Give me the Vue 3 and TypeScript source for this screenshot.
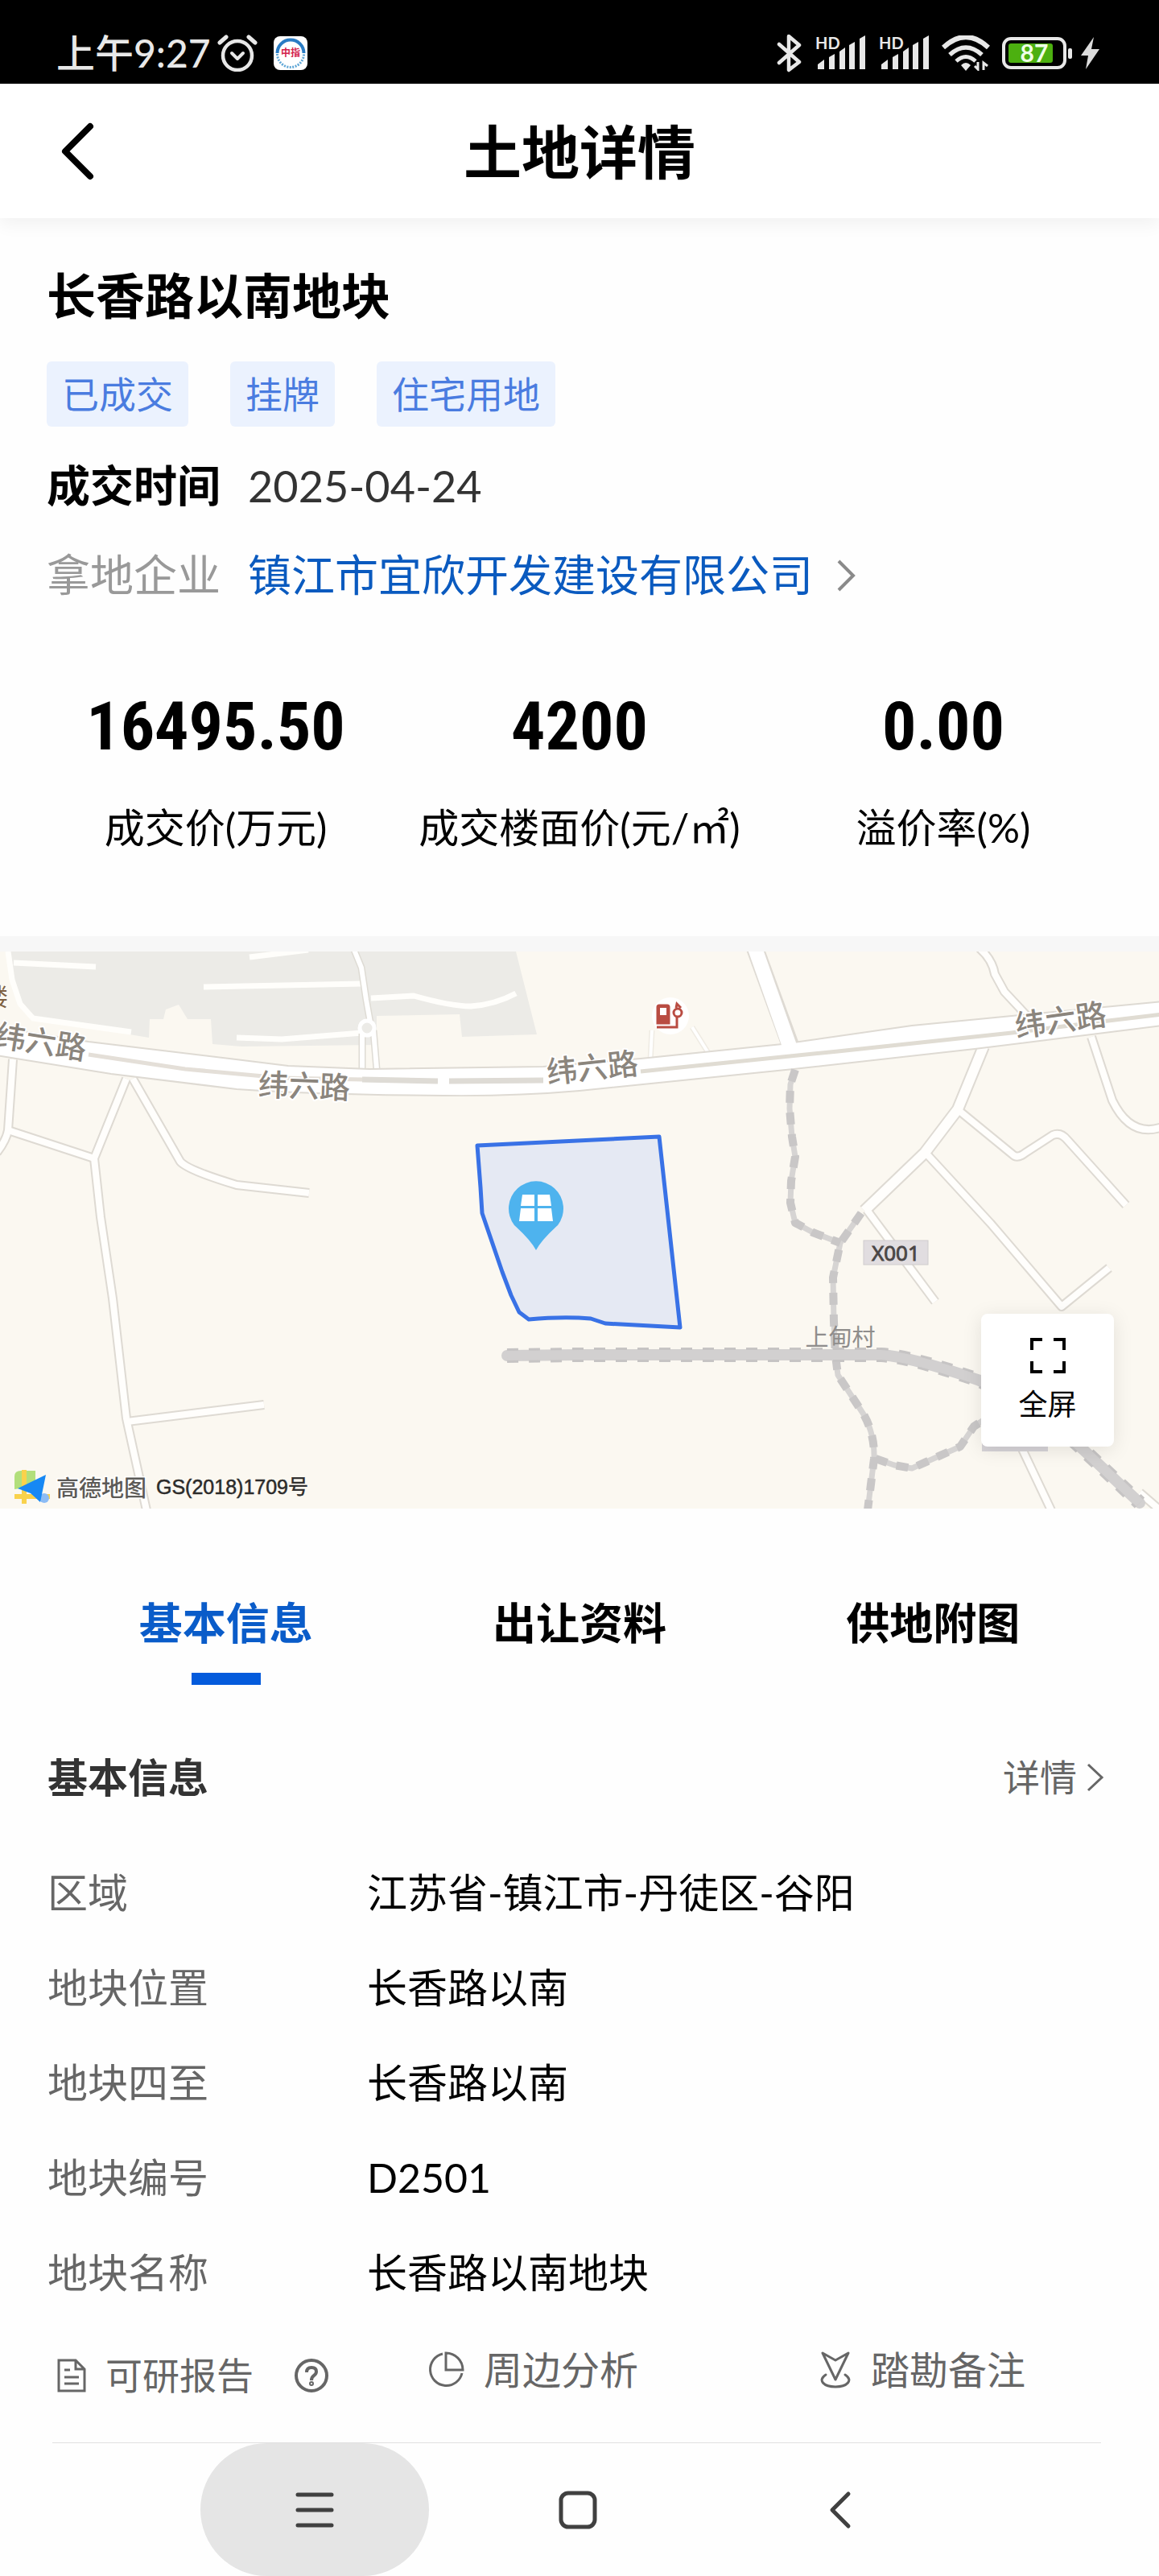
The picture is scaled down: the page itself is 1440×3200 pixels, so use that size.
<script setup lang="ts">
import { ref } from 'vue'

interface Stat { value: string; label: string }
interface Field { label: string; value: string }

const tags: string[] = ['已成交', '挂牌', '住宅用地']

const stats: Stat[] = [
  { value: '16495.50', label: '成交价(万元)' },
  { value: '4200', label: '成交楼面价(元/㎡)' },
  { value: '0.00', label: '溢价率(%)' },
]

const tabs: string[] = ['基本信息', '出让资料', '供地附图']
const activeTab = ref(0)

const fields: Field[] = [
  { label: '区域', value: '江苏省-镇江市-丹徒区-谷阳' },
  { label: '地块位置', value: '长香路以南' },
  { label: '地块四至', value: '长香路以南' },
  { label: '地块编号', value: 'D2501' },
  { label: '地块名称', value: '长香路以南地块' },
]

// Village lanes, drawn as a grey casing with a white core
const lanes: string[] = [
  'M16 134 L10 222 Q8 234 -4 250',
  'M10 222 L117 257',
  'M157 158 L117 257 L125 330 L140 431 L157 580 L182 694',
  'M165 158 L224 261 Q234 272 294 290 L384 300',
  'M158 584 L328 563',
  'M1217 -4 Q1233 10 1236 28 L1248 50 L1276 80',
  'M1192 198 L1258 252 Q1264 258 1274 250 L1308 228 Q1318 224 1326 234 L1399 315',
  'M1150 250 L1231 338 L1319 441 L1378 393',
  'M1077 321 L1162 435',
  'M1356 106 L1382 185 Q1405 232 1444 218',
  'M1270 618 L1306 694',
  'M1416 672 L1446 698',
]

const trails: string[] = [
  'M988 147 L982 165 L981 195 L984 230 L988 255 L983 285 L982 312 L988 337 L1010 349 L1044 362',
  'M1070 325 L1044 362 L1035 405 L1036 460 L1038 502 L1041 526 L1073 575 Q1087 600 1086 630 L1078 694',
  'M1088 630 L1111 638 L1133 642 L1193 615 L1210 590 L1225 580',
]

const highway = 'M630 502 L720 501 L1095 501 Q1130 503 1215 532 Q1290 565 1345 618 L1416 685'
</script>

<template>
  <div class="page">
    <div class="status">
      <div class="status-side">
        <span class="clock">上午9:27</span>
        <svg class="alarm" width="50" height="46" viewBox="0 0 50 46" fill="none" stroke="#e8e8e8" stroke-linecap="round">
          <circle cx="25" cy="26" r="18" stroke-width="4.5" />
          <path d="M3 10 L11 3 M47 10 L39 3" stroke-width="5" />
          <path d="M18 23 L25 30 L32 23" stroke-width="4" stroke-linejoin="round" />
        </svg>
        <svg width="42" height="42" viewBox="0 0 42 42">
          <rect width="42" height="42" rx="8" fill="#fff" />
          <path d="M4.500 21 A16.500 16.500 0 0 1 37.500 21" fill="none" stroke="#2a7cc4" stroke-width="4" />
          <path d="M4.500 22 A16.500 16.500 0 0 0 37.500 22" fill="none" stroke="#5fa6d6" stroke-width="3" stroke-dasharray="2 1.500" />
          <text x="21" y="25" font-size="12" font-weight="700" fill="#d3224a" text-anchor="middle">中指</text>
        </svg>
      </div>
      <div class="status-side right">
        <svg width="32" height="48" viewBox="0 0 32 48" fill="none" stroke="#e8e8e8" stroke-width="4.500" stroke-linecap="round" stroke-linejoin="round">
          <path d="M3 13 L28 35 L15 45 V3 L28 14 L3 36" />
        </svg>
        <svg v-for="n in 2" :key="n" class="signal" width="64" height="52" viewBox="0 -4 64 52" fill="#e8e8e8">
          <text x="1" y="17" font-size="20" font-weight="700">HD</text>
          <path d="M4 42 V36 L12 30 V42 Z M18 42 V27 L25 23 V42 Z M31 42 V20 L38 15 V42 Z M43 42 V12 L50 8 V42 Z M56 42 V4 L63 0 V42 Z" />
        </svg>
        <svg width="60" height="44" viewBox="0 0 60 44" fill="none" stroke="#e8e8e8">
          <path d="M2 15 Q30 -11 58 15" stroke-width="6" />
          <path d="M10 24 Q30 6 50 24" stroke-width="5.500" />
          <path d="M18 32 Q30 21 42 32" stroke-width="5" />
          <path d="M24 37 Q30 31 36 37 L30 44 Z" fill="#e8e8e8" stroke="none" />
          <path d="M45 33 V42 L41 38 M52 43 V34 L57 38" stroke-width="3" />
        </svg>
        <svg width="88" height="40" viewBox="0 0 88 40">
          <rect x="2" y="2" width="76" height="36" rx="9" fill="none" stroke="#e8e8e8" stroke-width="4" />
          <rect x="82" y="14" width="5" height="13" rx="2" fill="#e8e8e8" />
          <rect x="8" y="8" width="55" height="24" rx="3" fill="#4cb010" />
          <text x="40" y="31" font-size="30" font-weight="700" fill="#f0ffe8" text-anchor="middle">87</text>
        </svg>
        <svg class="bolt" width="24" height="40" viewBox="0 0 24 40"><path d="M17 0 L1 23 H10 L7 40 L24 15 H14 Z" fill="#dcdcdc" /></svg>
      </div>
    </div>

    <header class="header">
      <button class="back" type="button" aria-label="返回">
        <svg width="42" height="74" viewBox="0 0 42 74" fill="none" stroke="#000" stroke-width="8" stroke-linecap="round" stroke-linejoin="round">
          <path d="M37 6 L6 37 L37 68" />
        </svg>
      </button>
      <h1>土地详情</h1>
    </header>

    <section class="summary">
      <h2>长香路以南地块</h2>
      <div class="tags">
        <span v-for="tag in tags" :key="tag" class="tag">{{ tag }}</span>
      </div>
      <p class="line deal"><strong>成交时间</strong><span>2025-04-24</span></p>
      <p class="line buyer">
        <span class="muted">拿地企业</span>
        <a href="#company">镇江市宜欣开发建设有限公司
          <svg width="24" height="40" viewBox="0 0 24 40" fill="none" stroke="#8a8a8a" stroke-width="4"><path d="M2 2 L20 20 L2 38" /></svg>
        </a>
      </p>
      <div class="stats">
        <div v-for="s in stats" :key="s.label" class="stat">
          <b>{{ s.value }}</b>
          <span>{{ s.label }}</span>
        </div>
      </div>
    </section>

    <div class="map">
      <svg class="map-canvas" viewBox="0 0 1440 692" preserveAspectRatio="xMidYMid slice">
        <rect width="1440" height="692" fill="#fbf8f1" />
        <path d="M11 0 H641 L667 103 L574 106 L571 78 L468 80 V116 L300 118 L264 115 L262 84 H233 L222 66 L206 72 L203 84 H186 L185 107 L41 83 L22 60 Z" fill="#ecebe7" />
        <g fill="none" stroke="#fffefb" stroke-width="7">
          <path d="M10 0 L15 35 L25 65 L41 83 L163 100" />
          <path d="M17 14 L119 19 M310 7 L383 -2 M253 44 L450 40 M461 58 L514 55 Q560 68 585 68 Q615 66 641 52 M294 107 L350 109 L450 101" />
        </g>
        <path d="M440 -2 L449 20 L455 60 L460 88 M450 102 V146 M464 98 L468 146" fill="none" stroke="#dedbd4" stroke-width="9" />
        <path d="M440 -2 L449 20 L455 60 L460 88 M450 102 V146 M464 98 L468 146" fill="none" stroke="#fff" stroke-width="6" />
        <circle cx="456" cy="95" r="9" fill="#ecebe7" stroke="#fff" stroke-width="5" />
        <path d="M810 98 L808 136 M860 94 L880 126" stroke="#efebe3" stroke-width="7" />
        <path d="M810 98 L808 136 M860 94 L880 126" stroke="#fff" stroke-width="4" />

        <g fill="none" stroke-linejoin="round">
          <path v-for="d in lanes" :key="'c' + d" :d="d" stroke="#dedad3" stroke-width="12" />
          <path d="M938 -4 L984 122" stroke="#dedad3" stroke-width="22" />
          <path d="M1222 118 L1190 196 L1149 250 L1074 322" stroke="#dedad3" stroke-width="16" />
          <path v-for="d in lanes" :key="'f' + d" :d="d" stroke="#fffefc" stroke-width="8" />
          <path d="M1222 118 L1190 196 L1149 250 L1074 322" stroke="#fffefc" stroke-width="12" />
        </g>

        <path d="M-4 94 L110 112 L285 133 L358 142 L459 146 L675 143 L796 133 L972 115 L1133 92 L1257 80 L1444 62 V92 L1211 121 L986 146 L720 173 Q640 180 551 179 Q400 178 294 171 L138 152 L-4 129 Z" fill="#fff" stroke="#dedad3" stroke-width="2" />
        <path d="M938 -4 L984 126" fill="none" stroke="#fff" stroke-width="18" />
        <path d="M110 128 L230 146 L350 157 L450 159" fill="none" stroke="#e4dfd8" stroke-width="5" />
        <path d="M450 159 L544 161 M558 161 L675 160" stroke="#dedbd5" stroke-width="7" />
        <path d="M796 149 L1041 124 L1257 101 L1377 86 L1444 78" fill="none" stroke="#e0dcd3" stroke-width="5" />

        <g fill="none" stroke-linejoin="round">
          <path v-for="d in trails" :key="'t' + d" :d="d" stroke="#d6d4d3" stroke-width="7" />
          <path v-for="d in trails" :key="'d' + d" :d="d" stroke="#c9c7c7" stroke-width="10" stroke-dasharray="15 12" />
          <path :d="highway" stroke="#d2d0d0" stroke-width="14" stroke-linecap="round" />
          <path :d="highway" stroke="#c6c4c4" stroke-width="18" stroke-dasharray="14 13" />
          <path :d="highway" stroke="#d2d0d0" stroke-width="12" />
        </g>

        <path d="M593 241 L819 230 L845 467 L752 462 L734 456 Q700 453 657 457 L645 448 L635 427 L624 398 L599 325 L597 293 Z" fill="#e5e9f3" stroke="#3972e6" stroke-width="5" stroke-linejoin="round" />
        <path d="M666 371 Q659 358 639 340 A34 34 0 1 1 693 340 Q673 358 666 371 Z" fill="#4eb3ee" />
        <path d="M649 302 H664 V316 H647 Z M668 302 H683 L685 316 H668 Z M647 319 H664 V335 H645 Z M668 319 H685 L687 335 H668 Z" fill="#fff" />

        <circle cx="833" cy="80" r="23" fill="#fff" />
        <g fill="none" stroke="#b94c42" stroke-width="3">
          <path d="M817 69 Q817 67 819 67 H829 Q831 67 831 69 V89 H817 Z" fill="#b94c42" />
          <path d="M816 94 H841 V82" />
          <circle cx="842" cy="76" r="5" />
          <path d="M840 70 L841 65 L846 70" />
          <rect x="820" y="70" width="8" height="9" fill="#fff" stroke="none" />
        </g>

        <g font-size="38" font-weight="500" fill="#8b857d" text-anchor="middle" stroke="#fff" stroke-width="4" paint-order="stroke" stroke-linejoin="round">
          <text x="51" y="126" transform="rotate(9 51 112)">纬六路</text>
          <text x="378" y="181" transform="rotate(2 378 168)">纬六路</text>
          <text x="736" y="158" transform="rotate(-6 736 145)">纬六路</text>
          <text x="1318" y="99" transform="rotate(-8 1318 86)">纬六路</text>
        </g>
        <text x="-20" y="67" font-size="30" fill="#7d5f40">楼</text>
        <rect x="1073" y="359" width="80" height="30" fill="#e1dde0" stroke="#cfcccd" />
        <text x="1113" y="384" class="latin" font-size="26" fill="#4a4646" text-anchor="middle" stroke="#4a4646">X001</text>
        <text x="1044" y="490" font-size="29" fill="#8f8d8c" text-anchor="middle">上甸村</text>
        <rect x="1220" y="600" width="82" height="21" fill="#d6d3d7" />

        <path d="M18 668 V652 Q18 645 26 645 H44 V664 Z" fill="#b2df7b" />
        <path d="M30 644 V686 M18 677 H62" stroke="#f9d24c" stroke-width="6" />
        <circle cx="55" cy="679" r="6" fill="#8cbcf5" />
        <path d="M57 650 L22 667 L38 673 L50 684 Z" fill="#1688f4" />
        <text x="70" y="677" font-size="28" font-weight="500" fill="#5c5a57" stroke="#fff" stroke-width="3" paint-order="stroke">高德地图</text>
        <text x="194" y="674" class="arial" font-size="25" fill="#2c2b2a" stroke="#2c2b2a" stroke-width="0.500">GS(2018)1709号</text>
      </svg>
      <button class="fullscreen" type="button">
        <svg width="44" height="44" viewBox="0 0 44 44" fill="none" stroke="#000" stroke-width="4">
          <path d="M2 15 V2 H15 M29 2 H42 V15 M42 29 V42 H29 M15 42 H2 V29" />
        </svg>
        全屏
      </button>
    </div>

    <nav class="tabs" role="tablist">
      <button v-for="(t, i) in tabs" :key="t" type="button" role="tab" class="tab" :class="{ active: i === activeTab }" :aria-selected="i === activeTab" @click="activeTab = i">{{ t }}</button>
    </nav>

    <section class="info">
      <div class="info-head">
        <h3>基本信息</h3>
        <a href="#detail">详情
          <svg width="22" height="36" viewBox="0 0 22 36" fill="none" stroke="#666" stroke-width="3"><path d="M2 2 L19 18 L2 34" /></svg>
        </a>
      </div>
      <table>
        <tbody>
          <tr v-for="f in fields" :key="f.label">
            <th scope="row">{{ f.label }}</th>
            <td>{{ f.value }}</td>
          </tr>
        </tbody>
      </table>
    </section>

    <div class="actions">
      <button class="action report" type="button">
        <svg width="36" height="42" viewBox="0 0 36 42" fill="none" stroke="#666" stroke-width="3">
          <path d="M2 2 H23 L34 13 V40 H2 Z M23 2 V13 H34 M9 14 H16 M9 23 H27 M9 31 H27" />
        </svg>
        <span>可研报告</span>
        <svg class="help" width="44" height="44" viewBox="0 0 44 44" fill="none" stroke="#666" stroke-width="4">
          <circle cx="22" cy="22" r="19" />
          <path d="M16 18 Q16 12 22 12 Q28 12 28 17 Q28 20 25 22 Q22 24 22 28" />
          <circle cx="22" cy="32" r="1" />
        </svg>
      </button>
      <button class="action" type="button">
        <svg width="46" height="46" viewBox="0 0 46 46" fill="none" stroke="#666" stroke-width="3">
          <path d="M19 3 A20 20 0 1 0 43 27 M23 2 V23 H44 A21 21 0 0 0 23 2 Z" />
        </svg>
        <span>周边分析</span>
      </button>
      <button class="action" type="button">
        <svg width="40" height="46" viewBox="0 0 40 46" fill="none" stroke="#666" stroke-width="3" stroke-linejoin="round" stroke-linecap="round">
          <path d="M4 2 L20 11 L36 2 L20 35 Z M8 29 C-3 36 6 44 20 44 C34 44 43 36 32 29" />
        </svg>
        <span>踏勘备注</span>
      </button>
    </div>

    <div class="system-nav">
      <button class="pressed" type="button" aria-label="最近任务">
        <svg width="48" height="48" viewBox="0 0 48 48" stroke="#404040" stroke-width="5" stroke-linecap="round"><path d="M3 5 H45 M3 24 H45 M3 43 H45" /></svg>
      </button>
      <button type="button" aria-label="主屏幕">
        <svg width="48" height="48" viewBox="0 0 48 48" fill="none" stroke="#404040" stroke-width="5"><rect x="3" y="3" width="42" height="42" rx="9" /></svg>
      </button>
      <button type="button" aria-label="返回上一页">
        <svg width="48" height="48" viewBox="0 0 48 48" fill="none" stroke="#404040" stroke-width="5" stroke-linecap="round" stroke-linejoin="round"><path d="M33 4 L13 24 L33 44" /></svg>
      </button>
    </div>
  </div>
</template>

<style>
body {
  background: #fff;
}
</style>

<style scoped>
.page {
  background: #fefefe;
  color: #000;
  font-family: Lato, "Noto Sans CJK SC", sans-serif;
}
svg {
  display: block;
  flex: none;
}
button {
  border: 0;
  padding: 0;
  margin: 0;
  background: none;
  font: inherit;
  color: inherit;
}
a {
  text-decoration: none;
}
h1, h2, h3, p {
  margin: 0;
}

.status {
  display: flex;
  justify-content: space-between;
  align-items: center;
  box-sizing: border-box;
  height: 104px;
  padding: 28px 74px 0 70px;
  background: #000;
}
.status-side {
  display: flex;
  align-items: center;
}
.clock {
  color: #e8e8e8;
  font-size: 48px;
  font-weight: 500;
  line-height: 56px;
}
.alarm {
  margin: 0 20px 0 8px;
}
.right {
  gap: 15px;
}
.signal {
  overflow: visible;
}
.bolt {
  margin-left: -6px;
}

.header {
  display: grid;
  grid-template-columns: 150px 1fr 150px;
  align-items: center;
  height: 167px;
  background: #fff;
  box-shadow: 0 8px 20px rgba(0, 0, 0, 0.05);
}
.back {
  justify-self: start;
  padding-left: 75px;
}
h1 {
  text-align: center;
  font-size: 72px;
  line-height: 100px;
  font-weight: 700;
}

.summary {
  padding: 57px 42px 105px;
}
h2 {
  padding-left: 16px;
  font-size: 61px;
  line-height: 80px;
  font-weight: 700;
}
.tags {
  display: flex;
  gap: 52px;
  padding-left: 16px;
  margin-top: 41px;
}
.tag {
  padding: 0 19px;
  border-radius: 6px;
  background: #ebf2fe;
  color: #4a7ce0;
  font-size: 46px;
  line-height: 81px;
}
.line {
  display: flex;
  gap: 34px;
  padding-left: 16px;
  font-size: 54px;
  line-height: 72px;
}
.deal {
  margin-top: 38px;
  color: #333;
}
.deal strong {
  color: #000;
}
.buyer {
  margin-top: 39px;
}
.muted {
  color: #999;
}
.buyer a {
  display: flex;
  align-items: center;
  gap: 30px;
  color: #0a5abf;
}
.stats {
  display: grid;
  grid-template-columns: repeat(3, 1fr);
  margin-top: 112px;
}
.stat {
  display: flex;
  flex-direction: column;
  align-items: center;
  gap: 55px;
}
.stat b {
  font-family: "Roboto Condensed", "Liberation Sans Narrow", sans-serif;
  font-size: 84px;
  line-height: 80px;
}
.stat span {
  font-size: 50px;
  line-height: 60px;
  white-space: nowrap;
}

.map {
  position: relative;
  border-top: 19px solid #f7f7f7;
}
.map-canvas {
  width: 100%;
  height: 692px;
}
.map-canvas text {
  font-family: "Noto Sans CJK SC", sans-serif;
}
.map-canvas .latin {
  font-family: "Open Sans", sans-serif;
}
.map-canvas .arial {
  font-family: "Liberation Sans", "Noto Sans CJK SC", sans-serif;
}
.fullscreen {
  position: absolute;
  right: 56px;
  bottom: 77px;
  display: flex;
  flex-direction: column;
  align-items: center;
  justify-content: center;
  gap: 14px;
  width: 165px;
  height: 165px;
  border-radius: 8px;
  background: #fff;
  box-shadow: 0 4px 24px rgba(0, 0, 0, 0.1);
  font-size: 36px;
  line-height: 48px;
}

.tabs {
  display: grid;
  grid-template-columns: repeat(3, 1fr);
  padding: 107px 61px 0;
}
.tab {
  display: flex;
  flex-direction: column;
  align-items: center;
  gap: 25px;
  font-size: 54px;
  line-height: 72px;
  font-weight: 700;
}
.tab::after {
  content: "";
  width: 86px;
  height: 15px;
}
.tab.active {
  color: #0a5cc9;
}
.tab.active::after {
  background: #045bdc;
}

.info {
  padding: 85px 68px 0 59px;
}
.info-head {
  display: flex;
  justify-content: space-between;
  align-items: center;
  line-height: 60px;
}
h3 {
  font-size: 50px;
  color: #333;
}
.info-head a {
  display: flex;
  align-items: center;
  gap: 12px;
  font-size: 46px;
  color: #666;
}
table {
  width: 100%;
  margin-top: 54px;
  border-collapse: collapse;
  font-size: 50px;
  line-height: 118px;
}
th, td {
  padding: 0;
  text-align: left;
  font-weight: 400;
}
th {
  width: 397px;
  color: #666;
}

.actions {
  display: grid;
  grid-template-columns: 466fr 487fr 350fr;
  align-items: start;
  box-sizing: border-box;
  height: 153px;
  margin: 0 72px 0 65px;
  border-bottom: 1px solid #e0e0e0;
  color: #666;
  font-size: 48px;
  line-height: 60px;
}
.action {
  display: flex;
  align-items: center;
  gap: 24px;
  padding-top: 32px;
}
.report {
  padding: 39px 0 0 6px;
  font-size: 46px;
}
.help {
  margin-left: 26px;
}

.system-nav {
  display: grid;
  grid-template-columns: repeat(3, 1fr);
  padding: 0 232px 0 228px;
}
.system-nav button {
  display: grid;
  place-items: center;
  justify-self: center;
  width: 284px;
  height: 165px;
  border-radius: 83px;
}
.system-nav .pressed {
  background: #e5e5e5;
}
</style>
